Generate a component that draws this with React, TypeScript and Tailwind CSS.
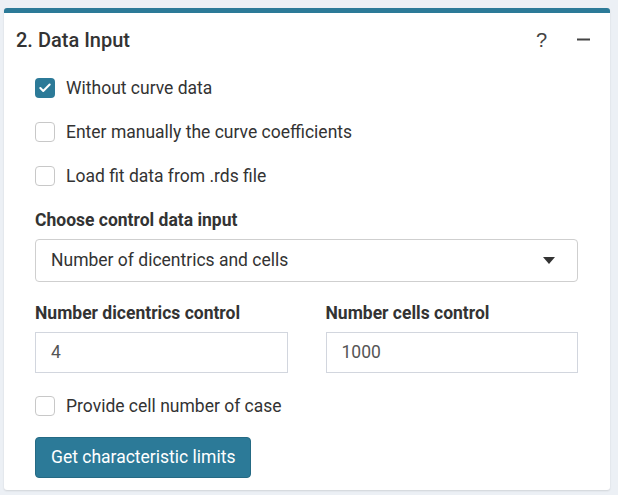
import { Check } from "lucide-react";

function CheckRow({ label, checked = false }: { label: string; checked?: boolean }) {
  return (
    <div className="flex h-[44px] items-center">
      <div
        className={
          checked
            ? "flex h-[20px] w-[20px] items-center justify-center rounded-[4px] bg-[#2c7a98]"
            : "h-[20px] w-[20px] rounded-[4px] border border-[#c8c8c8] bg-white"
        }
      >
        {checked && <Check size={14} strokeWidth={3.5} className="text-white" />}
      </div>
      <span className="ml-[11px] text-[17.5px] text-[#333]">{label}</span>
    </div>
  );
}

export default function App() {
  return (
    <div className="h-[495px] w-[618px] bg-[#ecf0f5] pl-[4px] pt-[8px] font-['Roboto',sans-serif]">
      <div className="h-[482px] w-[606px] rounded-[3px] border-t-[5px] border-[#2c7a98] bg-white shadow-[0_1px_2px_rgba(0,0,0,0.12)]">
        <div className="flex h-[53px] items-center justify-between pl-[12px] pr-[20px]">
          <h3 className="text-[20px] font-medium text-[#333]">2. Data Input</h3>
          <div className="flex items-center gap-[30px] text-[#444]">
            <span className="font-['Liberation_Sans',sans-serif] text-[20px] font-normal leading-none">?</span>
            <svg width="13" height="3" viewBox="0 0 13 3">
              <rect x="0" y="0.5" width="13" height="2" fill="#444" />
            </svg>
          </div>
        </div>

        <div className="pl-[31px] pr-[32px]">
          <CheckRow label="Without curve data" checked />
          <CheckRow label="Enter manually the curve coefficients" />
          <CheckRow label="Load fit data from .rds file" />

          <div className="mt-[12px] text-[17.5px] font-bold leading-[20px] text-[#333]">
            Choose control data input
          </div>
          <div className="mt-[9px] flex h-[43px] items-center justify-between rounded-[4px] border border-[#cfcfcf] pl-[15px] pr-[22px] text-[17.5px] text-[#333]">
            <span>Number of dicentrics and cells</span>
            <svg width="12" height="7" viewBox="0 0 12 7">
              <path d="M0 0 L12 0 L6 7 Z" fill="#333" />
            </svg>
          </div>

          <div className="mt-[21px] grid grid-cols-2 gap-[38px]">
            <div>
              <div className="text-[17.5px] font-bold leading-[20px] text-[#333]">
                Number dicentrics control
              </div>
              <div className="mt-[9px] flex h-[41px] items-center border border-[#d2d6de] px-[15px] text-[17.5px] text-[#555]">
                4
              </div>
            </div>
            <div>
              <div className="text-[17.5px] font-bold leading-[20px] text-[#333]">
                Number cells control
              </div>
              <div className="mt-[9px] flex h-[41px] items-center border border-[#d2d6de] px-[15px] text-[17.5px] text-[#555]">
                1000
              </div>
            </div>
          </div>

          <div className="mt-[11px]">
            <CheckRow label="Provide cell number of case" />
          </div>

          <button className="mt-[9px] h-[41px] rounded-[4px] border border-[#256a84] bg-[#2c7a98] px-[15px] text-[17.5px] text-white">
            Get characteristic limits
          </button>
        </div>
      </div>
    </div>
  );
}
